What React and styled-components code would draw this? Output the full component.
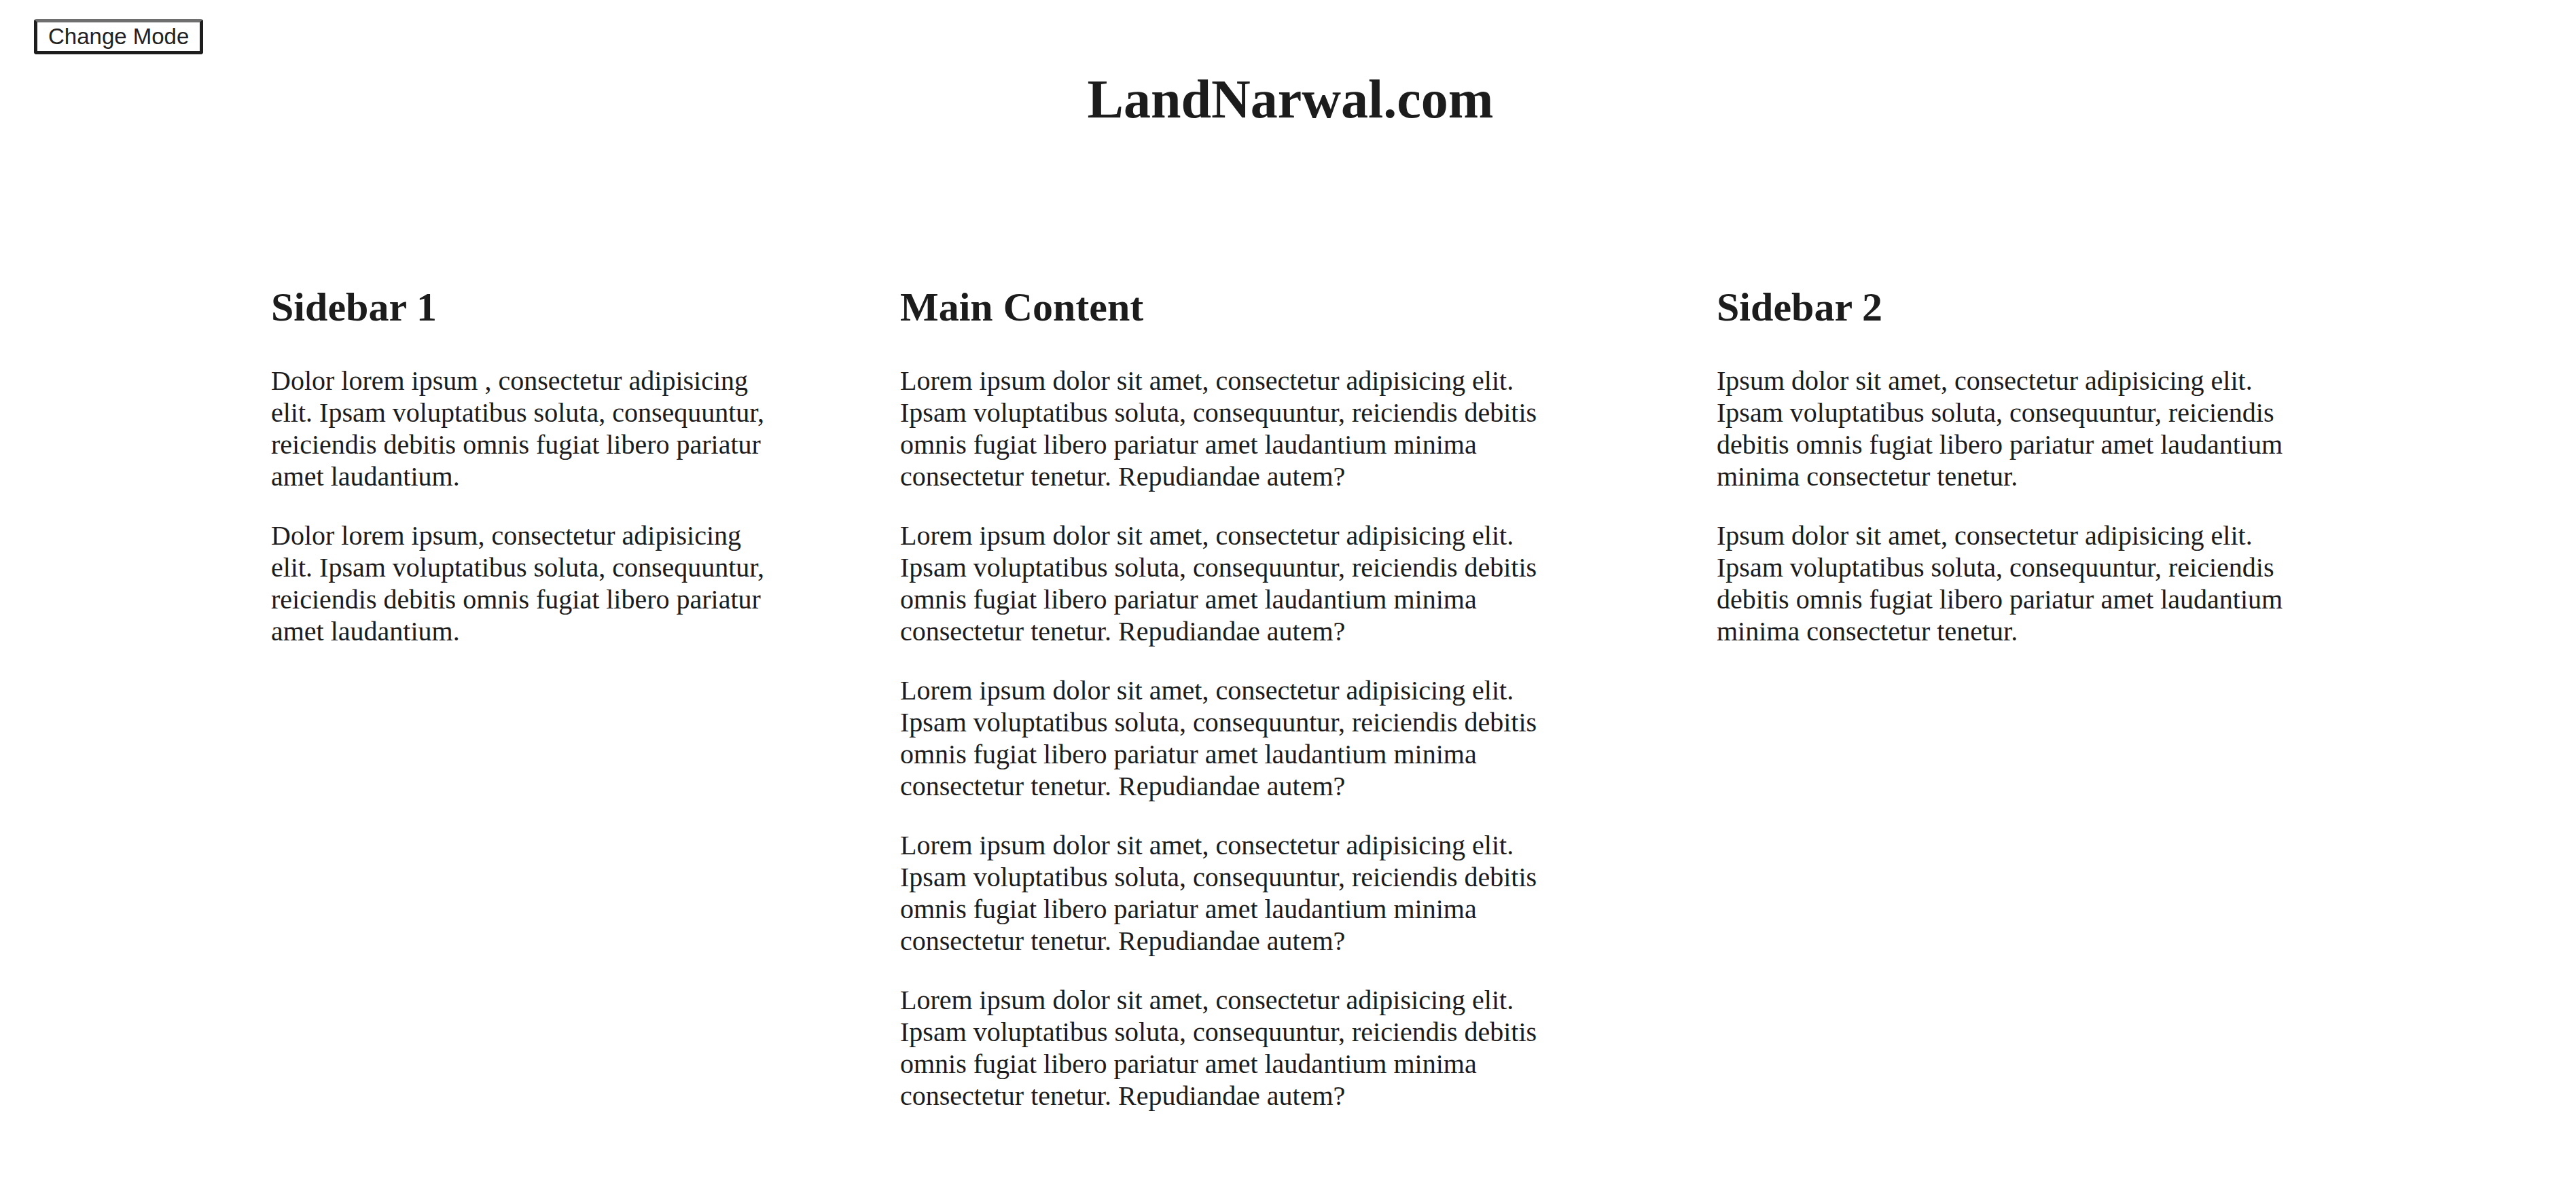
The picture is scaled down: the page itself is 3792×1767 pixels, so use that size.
import React from "react";
import styled, { createGlobalStyle } from "styled-components";

const GlobalStyle = createGlobalStyle`
  html, body {
    margin: 0;
    padding: 0;
    background: #ffffff;
  }
  body {
    font-family: "Liberation Serif", "Times New Roman", serif;
    color: #1c1c1c;
  }
`;

const sidebarOne = [
  "Dolor lorem ipsum , consectetur adipisicing elit. Ipsam voluptatibus soluta, consequuntur, reiciendis debitis omnis fugiat libero pariatur amet laudantium.",
  "Dolor lorem ipsum, consectetur adipisicing elit. Ipsam voluptatibus soluta, consequuntur, reiciendis debitis omnis fugiat libero pariatur amet laudantium.",
];

const mainText =
  "Lorem ipsum dolor sit amet, consectetur adipisicing elit. Ipsam voluptatibus soluta, consequuntur, reiciendis debitis omnis fugiat libero pariatur amet laudantium minima consectetur tenetur. Repudiandae autem?";

const sidebarTwo =
  "Ipsum dolor sit amet, consectetur adipisicing elit. Ipsam voluptatibus soluta, consequuntur, reiciendis debitis omnis fugiat libero pariatur amet laudantium minima consectetur tenetur.";

export default function App() {
  return (
    <Page>
      <GlobalStyle />
      <TopBar>
        <ModeButton type="button">Change Mode</ModeButton>
      </TopBar>
      <SiteTitle>LandNarwal.com</SiteTitle>

      <Columns>
        <Column $textWidth="750px">
          <Heading>Sidebar 1</Heading>
          {sidebarOne.map((t, i) => (
            <Text key={i}>{t}</Text>
          ))}
        </Column>

        <Column $textWidth="975px">
          <Heading>Main Content</Heading>
          {[0, 1, 2, 3, 4].map((i) => (
            <Text key={i}>{mainText}</Text>
          ))}
        </Column>

        <Column $textWidth="865px">
          <Heading>Sidebar 2</Heading>
          <Text>{sidebarTwo}</Text>
          <Text>{sidebarTwo}</Text>
        </Column>
      </Columns>
    </Page>
  );
}

const Page = styled.div`
  min-height: 1767px;
  box-sizing: border-box;
`;

const TopBar = styled.div`
  display: flex;
  padding: 28px 0 0 50px;
`;

const ModeButton = styled.button`
  font-family: "Liberation Sans", Arial, sans-serif;
  font-size: 33px;
  line-height: 38px;
  color: #222;
  background: #ffffff;
  padding: 2px 16px;
  border: 5px solid #1e1e1e;
  border-top-color: #6f6f6f;
  border-radius: 4px;
  cursor: pointer;
`;

const SiteTitle = styled.h1`
  margin: 20px 0 0;
  padding-left: 7px;
  text-align: center;
  font-size: 80px;
  line-height: 92px;
  font-weight: 700;
`;

const Columns = styled.div`
  display: grid;
  grid-template-columns: 926px 1202px 1fr;
  padding: 226px 0 0 399px;
`;

const Column = styled.div`
  & > p {
    max-width: ${(p) => p.$textWidth};
  }
`;

const Heading = styled.h2`
  margin: 0 0 50px;
  font-size: 60px;
  line-height: 69px;
  font-weight: 700;
`;

const Text = styled.p`
  margin: 40px 0;
  font-size: 40px;
  line-height: 47px;
`;
